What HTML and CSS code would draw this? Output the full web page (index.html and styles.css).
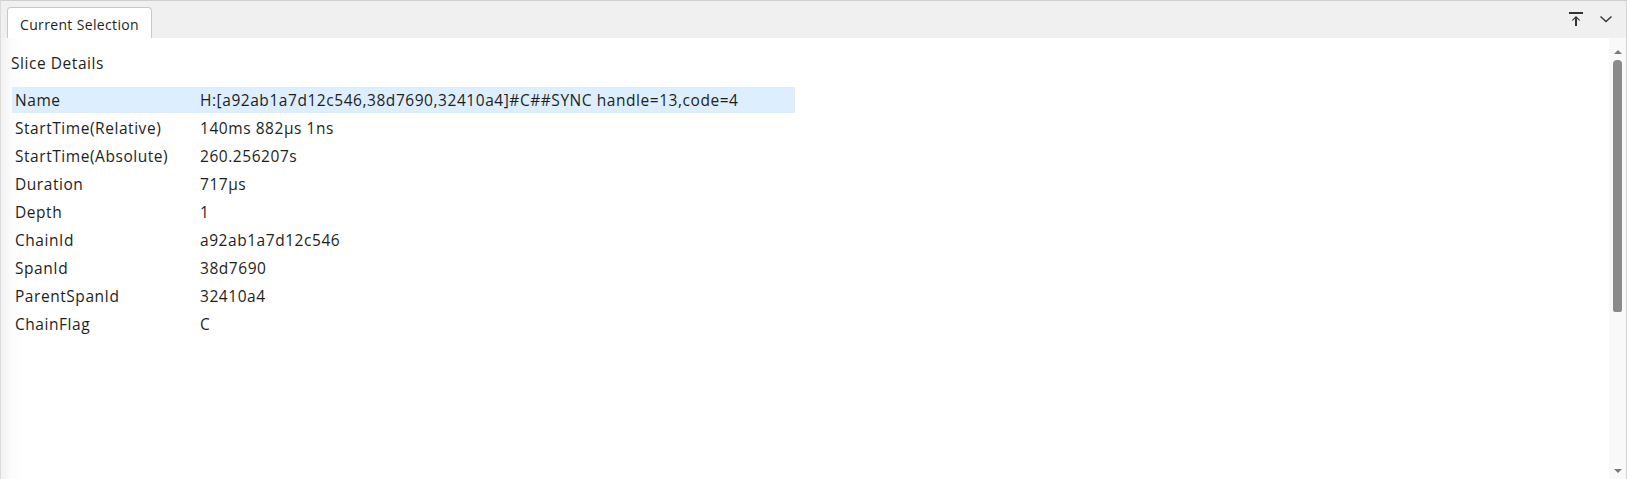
FILE: index.html
```html
<!DOCTYPE html>
<html>
<head>
<meta charset="utf-8">
<link rel="stylesheet" href="styles.css">
</head>
<body>
<div class="panel">
  <div class="tabbar">
    <div class="tab">Current Selection</div>
    <div class="actions">
      <svg class="icon" width="16" height="16" viewBox="0 0 16 16">
        <rect x="1" y="1" width="14" height="2" fill="#333"/>
        <path d="M8 5 L3.5 9.5 L5 9.5 L7 7.5 L7 15 L9 15 L9 7.5 L11 9.5 L12.5 9.5 Z" fill="#333"/>
      </svg>
      <svg class="icon" width="16" height="16" viewBox="0 0 16 16">
        <path d="M2.5 5.5 L8 10.5 L13.5 5.5" fill="none" stroke="#333" stroke-width="1.4"/>
      </svg>
    </div>
  </div>
  <div class="body">
    <div class="content">
      <div class="title">Slice Details</div>
      <div class="rows">
        <div class="row selected"><span class="k">Name</span><span class="v">H:[a92ab1a7d12c546,38d7690,32410a4]#C##SYNC handle=13,code=4</span></div>
        <div class="row"><span class="k">StartTime(Relative)</span><span class="v">140ms 882μs 1ns</span></div>
        <div class="row"><span class="k">StartTime(Absolute)</span><span class="v">260.256207s</span></div>
        <div class="row"><span class="k">Duration</span><span class="v">717μs</span></div>
        <div class="row"><span class="k">Depth</span><span class="v">1</span></div>
        <div class="row"><span class="k">ChainId</span><span class="v">a92ab1a7d12c546</span></div>
        <div class="row"><span class="k">SpanId</span><span class="v">38d7690</span></div>
        <div class="row"><span class="k">ParentSpanId</span><span class="v">32410a4</span></div>
        <div class="row"><span class="k">ChainFlag</span><span class="v">C</span></div>
      </div>
    </div>
    <div class="scrollbar">
      <div class="arrow up"></div>
      <div class="track"><div class="thumb"></div></div>
      <div class="arrow down"></div>
    </div>
  </div>
</div>
</body>
</html>
```

FILE: styles.css
```css
html, body {
  margin: 0;
  padding: 0;
  background: #ffffff;
}
body {
  font-family: "Open Sans", "Noto Sans", "Liberation Sans", sans-serif;
  font-size: 15.5px;
  letter-spacing: 0.55px;
  color: #1e1e1e;
}
.panel {
  width: 1627px;
  height: 479px;
  box-sizing: border-box;
  border-top: 1px solid #cfcfcf;
  border-left: 1px solid #dcdcdc;
  border-right: 1px solid #d4d4d4;
  display: flex;
  flex-direction: column;
}
.tabbar {
  height: 37px;
  background: #f0f0f0;
  display: flex;
  align-items: flex-end;
  padding-left: 6px;
  flex: none;
}
.tab {
  height: 31px;
  box-sizing: border-box;
  width: 145px;
  background: #fff;
  border: 1px solid #c8c8c8;
  border-bottom: none;
  border-radius: 4px 4px 0 0;
  display: flex;
  align-items: center;
  justify-content: center;
  font-size: 14px;
  letter-spacing: 0.35px;
  color: #1e1e1e;
  padding-top: 2px;
}
.actions {
  margin-left: auto;
  align-self: stretch;
  display: flex;
  align-items: center;
  gap: 14px;
  padding-right: 12px;
  padding-bottom: 2px;
}
.icon { display: block; }
.body {
  flex: 1;
  display: flex;
  background: linear-gradient(to right, #f2f2f2 0px, #fbfbfb 10px, #ffffff 22px);
  min-height: 0;
}
.content {
  flex: 1;
  padding: 15px 0 0 10px;
}
.title {
  height: 20px;
  line-height: 20px;
  margin-bottom: 14px;
}
.rows {
  display: flex;
  flex-direction: column;
  gap: 2px;
  padding-left: 1px;
}
.row {
  width: 783px;
  height: 26px;
  box-sizing: border-box;
  padding-left: 3px;
  display: grid;
  grid-template-columns: 185px auto;
  align-items: center;
}
.row.selected {
  background: #ddeeff;
}
.scrollbar {
  width: 17px;
  display: flex;
  flex-direction: column;
  align-items: center;
  background: #f9f9f9;
  padding: 12px 0 6px;
  box-sizing: border-box;
}
.arrow {
  width: 0;
  height: 0;
  border-left: 4px solid transparent;
  border-right: 4px solid transparent;
  flex: none;
}
.arrow.up { border-bottom: 4px solid #7a7a7a; }
.arrow.down { border-top: 4px solid #7a7a7a; }
.track {
  flex: 1;
  width: 100%;
  display: flex;
  justify-content: center;
  padding-top: 6px;
}
.thumb {
  width: 9px;
  height: 252px;
  background: #8a8a8a;
  border-radius: 4px 4px 2px 2px;
}
```
